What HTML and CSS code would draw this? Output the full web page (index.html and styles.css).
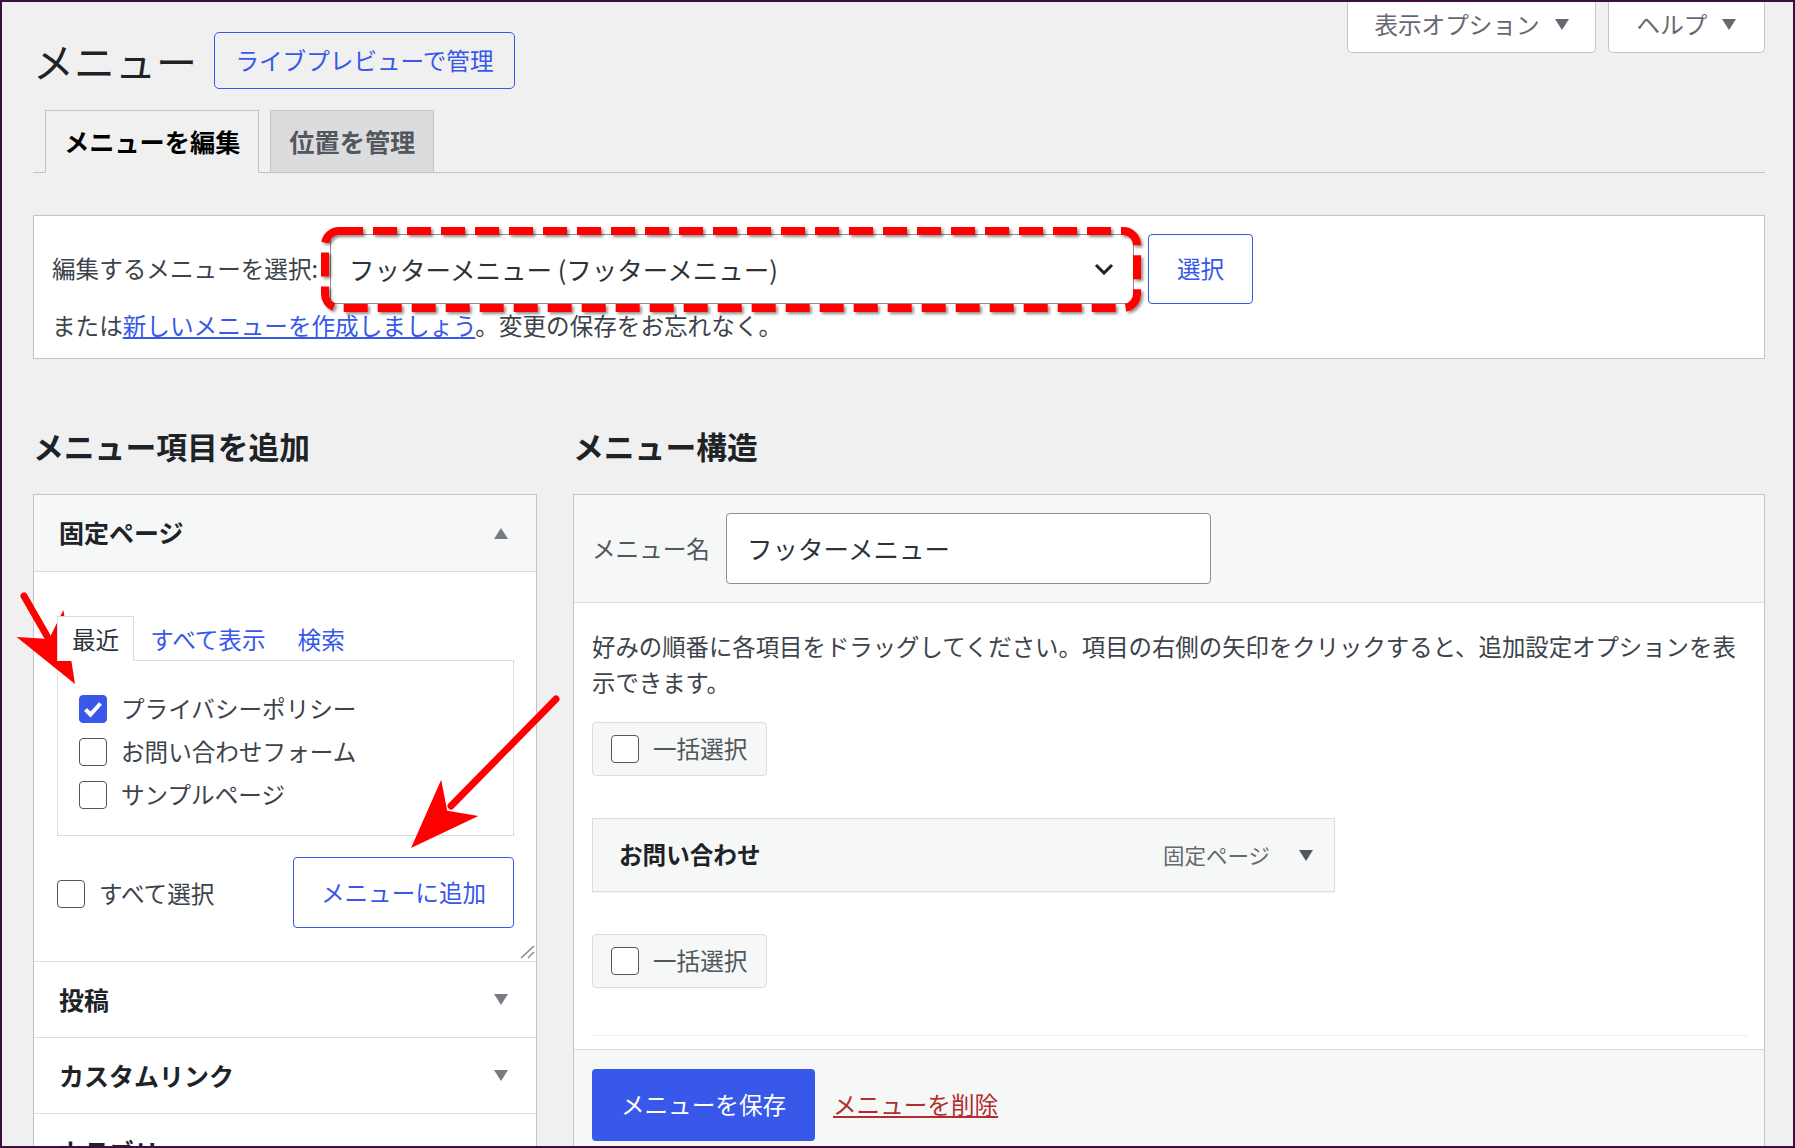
FILE: index.html
```html
<!DOCTYPE html>
<html lang="ja">
<head>
    <meta charset="UTF-8">
    <meta name="viewport" content="width=device-width, initial-scale=1.0">
    <title>メニュー</title>
    <link rel="stylesheet" href="styles.css">
</head>
<body>
<div class="frame">
    <div class="wrap">
        <div class="screen-meta-links">
            <button class="meta-tab options">表示オプション <span class="tri-down"></span></button>
            <button class="meta-tab help">ヘルプ <span class="tri-down"></span></button>
        </div>

        <div class="title-row">
            <h1>メニュー</h1>
            <a class="title-action" href="#">ライブプレビューで管理</a>
        </div>

        <nav class="nav-tabs">
            <a class="nav-tab active" href="#">メニューを編集</a>
            <a class="nav-tab" href="#">位置を管理</a>
        </nav>

        <div class="manage-menus">
            <div class="select-row">
                <label class="select-label">編集するメニューを選択:</label>
                <div class="fake-select">
                    <span>フッターメニュー (フッターメニュー)</span>
                    <svg width="20" height="12" viewBox="0 0 20 12"><path d="M2 2 L10 10 L18 2" fill="none" stroke="#1d2327" stroke-width="3"/></svg>
                </div>
                <button class="btn-outline btn-select">選択</button>
            </div>
            <p class="manage-note">または<a href="#">新しいメニューを作成しましょう</a>。変更の保存をお忘れなく。</p>
        </div>

        <div class="columns">
            <!-- left: add items -->
            <div class="col-left">
                <h2>メニュー項目を追加</h2>
                <div class="accordion">
                    <div class="acc-title open">固定ページ <span class="tri-up"></span></div>
                    <div class="acc-body">
                        <ul class="item-tabs">
                            <li class="current">最近</li>
                            <li><a href="#">すべて表示</a></li>
                            <li><a href="#">検索</a></li>
                        </ul>
                        <div class="tab-panel">
                            <div class="check-row">
                                <span class="cb checked"><svg width="26" height="26" viewBox="0 0 26 26"><path d="M5.5 13.5 L10.5 18.5 L20.5 7.5" fill="none" stroke="#fff" stroke-width="4"/></svg></span>
                                <span>プライバシーポリシー</span>
                            </div>
                            <div class="check-row">
                                <span class="cb"></span>
                                <span>お問い合わせフォーム</span>
                            </div>
                            <div class="check-row">
                                <span class="cb"></span>
                                <span>サンプルページ</span>
                            </div>
                        </div>
                        <div class="add-row">
                            <div class="check-row">
                                <span class="cb"></span>
                                <span>すべて選択</span>
                            </div>
                            <button class="btn-outline btn-add">メニューに追加</button>
                        </div>
                        <svg class="grip" width="16" height="14" viewBox="0 0 16 14"><path d="M15 1 L2 13 M15 7 L9 13" stroke="#787c82" stroke-width="1.2"/></svg>
                    </div>
                    <div class="acc-title">投稿 <span class="tri-down"></span></div>
                    <div class="acc-title">カスタムリンク <span class="tri-down"></span></div>
                    <div class="acc-title">カテゴリー <span class="tri-down"></span></div>
                </div>
            </div>

            <!-- right: menu structure -->
            <div class="col-right">
                <h2>メニュー構造</h2>
                <div class="menu-edit">
                    <div class="menu-header">
                        <label class="menu-name-label">メニュー名</label>
                        <div class="text-input">フッターメニュー</div>
                    </div>
                    <div class="menu-body">
                        <p class="instructions">好みの順番に各項目をドラッグしてください。項目の右側の矢印をクリックすると、追加設定オプションを表示できます。</p>
                        <div class="bulk-select">
                            <span class="cb"></span>
                            <span>一括選択</span>
                        </div>
                        <div class="menu-item">
                            <span class="item-title">お問い合わせ</span>
                            <span class="item-controls">
                                <span class="item-type">固定ページ</span>
                                <span class="tri-down dark"></span>
                            </span>
                        </div>
                        <div class="bulk-select second">
                            <span class="cb"></span>
                            <span>一括選択</span>
                        </div>
                        <div class="separator"></div>
                    </div>
                    <div class="menu-footer">
                        <button class="btn-primary">メニューを保存</button>
                        <a class="delete-link" href="#">メニューを削除</a>
                    </div>
                </div>
            </div>
        </div>
    </div>

    <!-- red annotation marks drawn over the screenshot -->
    <svg class="annotations" width="1795" height="1148" viewBox="0 0 1795 1148">
        <defs>
            <filter id="shadow" x="-5%" y="-20%" width="110%" height="140%">
                <feDropShadow dx="2" dy="2" stdDeviation="1.5" flood-color="#000" flood-opacity="0.45"/>
            </filter>
        </defs>
        <rect x="325" y="231" width="812" height="77" rx="14" fill="none" stroke="#ff0000" stroke-width="8" stroke-dasharray="24 10" filter="url(#shadow)"/>
        <line x1="24" y1="596" x2="47" y2="636" stroke="#ff0000" stroke-width="7" stroke-linecap="round"/>
        <polygon points="75,684 63.4,610 49,639 16.6,637" fill="#ff0000"/>
        <line x1="556" y1="699" x2="451" y2="806" stroke="#ff0000" stroke-width="7" stroke-linecap="round"/>
        <polygon points="411,848 441.2,779.7 447.2,810.7 478.4,815.9" fill="#ff0000"/>
    </svg>
</div>
</body>
</html>
```

FILE: styles.css
```css
body {
    margin: 0;
    background: #f0f0f1;
    font-family: "Noto Sans CJK JP", "Noto Sans", sans-serif;
    font-size: 23.6px;
    line-height: 1.5;
    color: #3c434a;
}
button {
    font: inherit;
    cursor: pointer;
}
a {
    color: #3858e9;
}
.frame {
    position: relative;
    width: 1795px;
    height: 1148px;
    box-sizing: border-box;
    border: 2px solid #3e0e3e;
    overflow: hidden;
    background: #f0f0f1;
}
.wrap {
    padding: 0 28px 0 31px;
}

/* top right tabs */
.screen-meta-links {
    float: right;
    display: flex;
    gap: 12px;
}
.meta-tab {
    display: flex;
    align-items: center;
    justify-content: center;
    gap: 15px;
    height: 51px;
    box-sizing: border-box;
    padding: 0 0 5px;
    background: #fff;
    border: 1px solid #c3c4c7;
    border-top: none;
    border-radius: 0 0 5px 5px;
    color: #646970;
    font-size: 23.6px;
    line-height: 1;
}
.meta-tab.options {
    width: 249px;
}
.meta-tab.help {
    width: 157px;
}
.tri-down {
    width: 0;
    height: 0;
    border-left: 7px solid transparent;
    border-right: 7px solid transparent;
    border-top: 11px solid #787c82;
}
.tri-down.dark {
    border-top-color: #50575e;
}
.meta-tab .tri-down {
    border-left-width: 7px;
    border-right-width: 7px;
    border-top: 11px solid #646970;
}
.tri-up {
    width: 0;
    height: 0;
    border-left: 7px solid transparent;
    border-right: 7px solid transparent;
    border-bottom: 11px solid #787c82;
}

/* title */
.title-row {
    display: flex;
    align-items: center;
    gap: 17px;
    padding-top: 30px;
}
h1 {
    margin: 0;
    font-size: 41px;
    font-weight: 400;
    line-height: 1;
    color: #1d2327;
}
.title-action {
    display: flex;
    align-items: center;
    justify-content: center;
    width: 301px;
    height: 57px;
    box-sizing: border-box;
    border: 1px solid #3858e9;
    border-radius: 5px;
    color: #3858e9;
    font-size: 23.6px;
    text-decoration: none;
}

/* nav tabs */
.nav-tabs {
    display: flex;
    gap: 11px;
    margin-top: 21px;
    padding-left: 12px;
    border-bottom: 1px solid #c3c4c7;
}
.nav-tab {
    margin-bottom: -1px;
    padding: 0 18px;
    line-height: 61px;
    border: 1px solid #c3c4c7;
    background: #dcdcde;
    color: #50575e;
    font-size: 25.2px;
    font-weight: 700;
    text-decoration: none;
}
.nav-tab.active {
    background: #f0f0f1;
    border-bottom-color: #f0f0f1;
    color: #000;
}

/* select menu box */
.manage-menus {
    margin-top: 42px;
    background: #fff;
    border: 1px solid #c3c4c7;
    padding: 18px 18px 16px;
}
.select-row {
    display: flex;
    align-items: center;
    height: 70px;
}
.select-label {
    width: 278px;
    flex: none;
    white-space: nowrap;
}
.fake-select {
    display: flex;
    align-items: center;
    justify-content: space-between;
    width: 804px;
    height: 70px;
    box-sizing: border-box;
    padding: 0 19px 0 18px;
    border: 1px solid #8c8f94;
    border-radius: 4px;
    background: #fff;
    color: #2c3338;
    font-size: 25.5px;
}
.btn-outline {
    background: #fff;
    border: 1px solid #3858e9;
    border-radius: 4px;
    color: #3858e9;
    font-size: 23.6px;
    padding: 0;
}
.btn-select {
    width: 105px;
    height: 70px;
    margin-left: 14px;
}
.manage-note {
    margin: 4px 0 0;
    line-height: 34px;
}

/* columns */
.columns {
    display: flex;
    align-items: flex-start;
    gap: 36px;
    margin-top: 67px;
}
.col-left {
    width: 504px;
    flex: none;
}
.col-right {
    flex: 1;
    min-width: 0;
}
h2 {
    margin: 0 0 28px;
    font-size: 30.8px;
    line-height: 40px;
    font-weight: 700;
    color: #1d2327;
}

/* accordion */
.accordion {
    border: 1px solid #c3c4c7;
    border-bottom: none;
    background: #fff;
}
.acc-title {
    display: flex;
    align-items: center;
    justify-content: space-between;
    height: 75px;
    padding: 0 28px 0 25px;
    border-bottom: 1px solid #dcdcde;
    font-size: 25px;
    font-weight: 700;
    color: #1d2327;
}
.acc-title.open {
    height: 76px;
    background: #f6f7f7;
}
.acc-body {
    position: relative;
    padding: 44px 22px 33px 23px;
    border-bottom: 1px solid #dcdcde;
}
.item-tabs {
    display: flex;
    margin: 0 0 -1px;
    padding: 0;
    list-style: none;
}
.item-tabs li {
    line-height: 44px;
    border-top: 1px solid transparent;
}
.item-tabs li.current {
    padding: 0 14px;
    border: 1px solid #dcdcde;
    border-bottom: none;
    background: #fff;
    color: #2c3338;
    position: relative;
    z-index: 1;
}
.item-tabs a {
    padding: 0 16px;
    text-decoration: none;
}
.tab-panel {
    height: 176px;
    box-sizing: border-box;
    padding: 26px 21px 19px;
    border: 1px solid #dcdcde;
}
.check-row {
    display: flex;
    align-items: center;
    gap: 14px;
    height: 43px;
}
.cb {
    display: flex;
    align-items: center;
    justify-content: center;
    width: 28px;
    height: 28px;
    flex: none;
    box-sizing: border-box;
    border: 1px solid #50575e;
    border-radius: 4px;
    background: #fff;
}
.cb.checked {
    background: #3858e9;
    border-color: #3858e9;
}
.add-row {
    display: flex;
    align-items: center;
    justify-content: space-between;
    margin-top: 21px;
}
.add-row .check-row {
    margin-top: 2px;
}
.btn-add {
    width: 221px;
    height: 71px;
}
.grip {
    position: absolute;
    right: 1px;
    bottom: 2px;
}

/* menu structure */
.menu-edit {
    border: 1px solid #c3c4c7;
    background: #fff;
}
.menu-header {
    display: flex;
    align-items: center;
    gap: 16px;
    padding: 18px;
    background: #f6f7f7;
    border-bottom: 1px solid #dcdcde;
}
.menu-name-label {
    color: #50575e;
}
.text-input {
    display: flex;
    align-items: center;
    width: 485px;
    height: 71px;
    box-sizing: border-box;
    padding-left: 20px;
    border: 1px solid #8c8f94;
    border-radius: 4px;
    background: #fff;
    color: #2c3338;
    font-size: 25.5px;
}
.menu-body {
    padding: 25px 17px 13px 18px;
}
.instructions {
    margin: 0;
    font-size: 23.4px;
    line-height: 36px;
}
.bulk-select {
    display: flex;
    align-items: center;
    gap: 14px;
    width: fit-content;
    height: 54px;
    box-sizing: border-box;
    margin-top: 22px;
    padding: 0 19px 0 18px;
    background: #f6f7f7;
    border: 1px solid #dcdcde;
    border-radius: 4px;
    color: #50575e;
}
.bulk-select.second {
    margin-top: 42px;
}
.menu-item {
    display: flex;
    align-items: center;
    justify-content: space-between;
    width: 743px;
    height: 74px;
    box-sizing: border-box;
    margin-top: 42px;
    padding: 0 21px 0 26px;
    background: #f6f7f7;
    border: 1px solid #dcdcde;
    box-shadow: 0 1px 1px rgba(0,0,0,0.04);
}
.item-title {
    font-weight: 700;
    color: #1d2327;
}
.item-controls {
    display: flex;
    align-items: center;
    gap: 29px;
}
.item-type {
    font-size: 21.5px;
    color: #646970;
}
.separator {
    height: 1px;
    margin: 47px -1px 0 0;
    background: #f0f0f1;
}
.menu-footer {
    display: flex;
    align-items: center;
    gap: 18px;
    padding: 19px 18px;
    border-top: 1px solid #dcdcde;
    background: #f6f7f7;
}
.btn-primary {
    width: 223px;
    height: 72px;
    border: none;
    border-radius: 4px;
    background: #3858e9;
    color: #fff;
    font-size: 23.6px;
}
.delete-link {
    color: #b32d2e;
}

/* annotation overlay */
.annotations {
    position: absolute;
    top: -2px;
    left: -2px;
    pointer-events: none;
}
```
